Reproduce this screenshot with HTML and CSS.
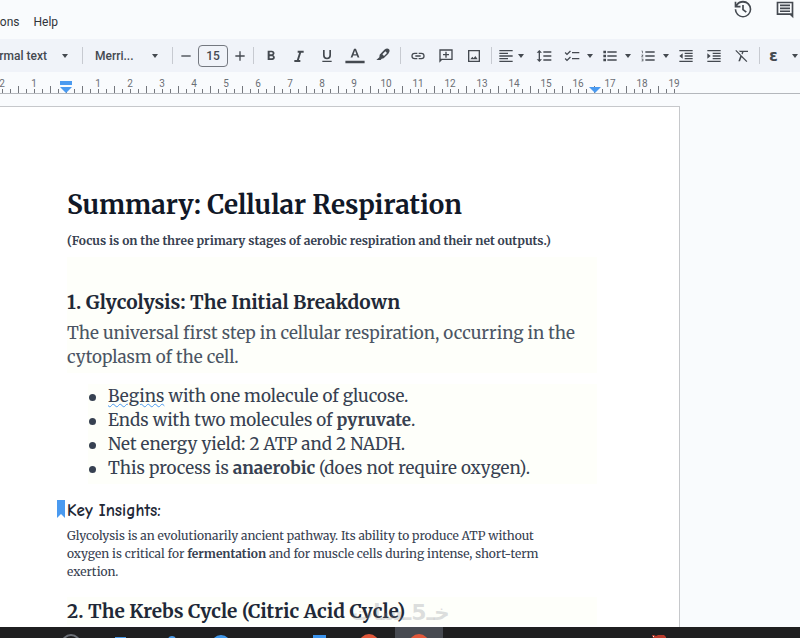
FILE: index.html
```html
<!DOCTYPE html>
<html lang="en">
<head>
  <meta charset="UTF-8">
  <meta name="viewport" content="width=device-width, initial-scale=1.0">
  <title>Summary: Cellular Respiration</title>
  <link rel="stylesheet" href="styles.css">
</head>
<body>
  <header class="topbar">
    <nav class="menu">
      <a href="#">Extensions</a>
      <a href="#">Help</a>
    </nav>
    <div class="actions">
      <button aria-label="Version history"><svg viewBox="0 0 24 24"><path d="M12 1a10 10 0 0 0-8 4V2H2v7h7V7H5.200A8 8 0 1 1 4 11H2A10 10 0 1 0 12 1zm-1 5v6l4.300 3.300 1.300-1.500L13 11V6z"/></svg></button>
      <button aria-label="Comments"><svg viewBox="0 0 24 24"><path d="M2 2v16h16l4 4V2zm2 2h16v12H4zm2 1.500v2h12v-2zm0 3.500v2h12V9zm0 3.500v2h12v-2z"/></svg></button>
    </div>
  </header>

  <div class="toolbar">
    <div class="dropdown style-pick">
      <select aria-label="Styles"><option>Normal text</option><option>Heading 1</option></select>
    </div>
    <span class="sep"></span>
    <div class="dropdown font-pick">
      <select aria-label="Font"><option>Merri...</option><option>Arial</option></select>
    </div>
    <span class="sep"></span>
    <div class="size">
      <button aria-label="Decrease font size"><svg viewBox="0 0 24 24"><path d="M5 11h14v2H5z"/></svg></button>
      <input type="text" value="15" aria-label="Font size">
      <button aria-label="Increase font size"><svg viewBox="0 0 24 24"><path d="M11 5h2v6h6v2h-6v6h-2v-6H5v-2h6z"/></svg></button>
    </div>
    <span class="sep"></span>
    <div class="group">
      <button aria-label="Bold"><svg viewBox="0 0 24 24"><path d="M15.600 10.790c.97-.67 1.650-1.770 1.650-2.790 0-2.260-1.750-4-4-4H7v14h7.040c2.090 0 3.710-1.700 3.710-3.790 0-1.520-.86-2.820-2.150-3.420zM10 6.500h3a1.500 1.500 0 0 1 0 3h-3zm3.500 9H10v-3h3.500a1.500 1.500 0 0 1 0 3z"/></svg></button>
      <button aria-label="Italic"><svg viewBox="0 0 24 24"><path d="M10 4v3h2.210l-3.420 11H5v3h9v-3h-2.210l3.420-11H19V4z"/></svg></button>
      <button aria-label="Underline"><svg viewBox="0 0 24 24"><path d="M12 17a6 6 0 0 0 6-6V3h-2.500v8a3.500 3.500 0 0 1-7 0V3H6v8a6 6 0 0 0 6 6zm-7 2v2h14v-2z"/></svg></button>
      <button aria-label="Text color"><svg class="wide" viewBox="0 0 24 20"><path d="M10.800 1h2.400l4.300 11h-2.300l-.9-2.500H9.700L8.800 12H6.500zm-.5 6.700h3.400L12 3.200zM0 16h24v3H0z"/></svg></button>
      <button aria-label="Highlight color"><svg viewBox="0 0 24 24"><path fill-rule="evenodd" d="M14 2.500c3-2 5.500-2 7-.5s1 4-1 6.500l-7 7-3 .5-1.500 2H2l4.500-4 .5-4zM15.500 5 11 9.500l2.500 2.500L18 7.500z"/></svg></button>
    </div>
    <span class="sep"></span>
    <div class="group">
      <button aria-label="Insert link"><svg viewBox="0 0 24 24"><path d="M3.900 12A3.100 3.100 0 0 1 7 8.900h4V7H7a5 5 0 0 0 0 10h4v-1.900H7A3.100 3.100 0 0 1 3.900 12zM8 13h8v-2H8zm9-6h-4v1.900h4a3.100 3.100 0 0 1 0 6.200h-4V17h4a5 5 0 0 0 0-10z"/></svg></button>
      <button aria-label="Add comment"><svg viewBox="0 0 24 24"><path d="M2 2v20l4-4h16V2zm2 2h16v12H4zm7 1.500V9H7.500v2H11v3.500h2V11h3.500V9H13V5.500z"/></svg></button>
      <button aria-label="Insert image"><svg viewBox="0 0 24 24"><path d="M3 3v18h18V3zm2 2h14v14H5zm1.500 12h11l-3.500-5-2.500 3.500L9.500 13z"/></svg></button>
    </div>
    <span class="sep"></span>
    <div class="group">
      <button class="more tight" aria-label="Align"><svg viewBox="0 0 24 24"><path d="M2 3h20v2H2zm0 4h13v2H2zm0 4h20v2H2zm0 4h13v2H2zm0 4h20v2H2z"/></svg></button>
      <button aria-label="Line spacing"><svg viewBox="0 0 24 24"><path d="M6 7h3L5 3 1 7h3v10H1l4 4 4-4H6zm5-2h12v2H11zm0 6h12v2H11zm0 6h12v2H11z"/></svg></button>
      <button class="more" aria-label="Checklist"><svg viewBox="0 0 24 24"><path d="M12 6h11v2H12zm0 9h11v2H12zM4.500 11 1 7.500 2.400 6.100l2.100 2.100L9 3.700l1.400 1.400zm0 9L1 16.500l1.400-1.400 2.100 2.100L9 12.700l1.400 1.400z"/></svg></button>
      <button class="more" aria-label="Bulleted list"><svg viewBox="0 0 24 24"><path d="M2 4h4v4H2zm0 6h4v4H2zm0 6h4v4H2zM8 5h14v2H8zm0 6h14v2H8zm0 6h14v2H8z"/></svg></button>
      <button class="more" aria-label="Numbered list"><svg viewBox="0 0 24 24"><path d="M2 17h2v.5H3v1h1v.5H2v1h3v-4H2zm1-9h1V4H2v1h1zm-1 3h1.800L2 13.100v.9h3v-1H3.200L5 10.900V10H2zm6-6v2h14V5zm0 14h14v-2H8zm0-6h14v-2H8z"/></svg></button>
      <button aria-label="Decrease indent"><svg viewBox="0 0 24 24"><path d="M2 3h20v2H2zm8 4h12v2H10zm0 4h12v2H10zm0 4h12v2H10zm-8 4h20v2H2zm0-7 5-4v8z"/></svg></button>
      <button aria-label="Increase indent"><svg viewBox="0 0 24 24"><path d="M2 3h20v2H2zm8 4h12v2H10zm0 4h12v2H10zm0 4h12v2H10zm-8 4h20v2H2zM7 12 2 8v8z"/></svg></button>
      <button aria-label="Clear formatting"><svg viewBox="0 0 24 24"><path d="M3.300 3 2 4.300l7.500 7.500L6.500 20H9l2.300-6.300L18.700 21l1.300-1.300zM7 4l2 2h3l-.8 2.200 1.600 1.600L14.300 6H21V4z"/></svg></button>
    </div>
    <span class="sep"></span>
    <button class="more glyph" aria-label="Input tools">ε</button>
  </div>

  <div class="ruler">
    <ol class="marks">
      <li>2</li><li>1</li>
      <li class="zero"><svg viewBox="0 0 12 12"><path d="M0 0h12v4H0zM0 6h12l-6 6z"/></svg></li>
      <li>1</li><li>2</li><li>3</li><li>4</li><li>5</li><li>6</li><li>7</li><li>8</li><li>9</li><li>10</li>
      <li>11</li><li>12</li><li>13</li><li>14</li><li>15</li>
      <li class="stop">16<svg viewBox="0 0 12 12"><path d="M0 6h12l-6 6z"/></svg></li>
      <li>17</li><li>18</li><li class="last">19</li>
    </ol>
  </div>

  <main class="canvas">
    <article class="sheet">
      <h1>Summary: Cellular Respiration</h1>
      <p class="focus">(Focus is on the three primary stages of aerobic respiration and their net outputs.)</p>
      <section class="tint intro">
        <h2>1. Glycolysis: The Initial Breakdown</h2>
        <p class="lead">The universal first step in cellular respiration, occurring in the cytoplasm of the cell.</p>
      </section>
      <ul class="tint points">
        <li><span class="typo">Begins</span> with one molecule of glucose.</li>
        <li>Ends with two molecules of <b>pyruvate</b>.</li>
        <li>Net energy yield: 2 ATP and 2 NADH.</li>
        <li>This process is <b>anaerobic</b> (does not require oxygen).</li>
      </ul>
      <h3><svg class="bookmark" viewBox="0 0 8 18"><path d="M0 0h8v18l-4-4-4 4z"/></svg>Key Insights:</h3>
      <p class="note">Glycolysis is an evolutionarily ancient pathway. Its ability to produce ATP without oxygen is critical for <b>fermentation</b> and for muscle cells during intense, short-term exertion.</p>
      <h2 class="tint krebs">2. The Krebs Cycle (Citric Acid Cycle)<span class="watermark" lang="ar" dir="rtl">خـ5ـسات</span></h2>
    </article>
  </main>

  <footer class="taskbar">
    <button aria-label="Search"><svg viewBox="0 0 20 4"><circle cx="12" cy="10" r="9" fill="none" stroke="#6d7178" stroke-width="2"/></svg></button>
    <button aria-label="Task view"><svg viewBox="0 0 20 4"><path fill="#4a9ae8" d="M6 3h11v1H6z"/></svg></button>
    <button aria-label="Assistant"><svg viewBox="0 0 20 4"><circle cx="13" cy="6" r="4" fill="#4a9ae8"/></svg></button>
    <button aria-label="Browser"><svg viewBox="0 0 20 4"><circle cx="12" cy="11" r="10" fill="#3f97ea"/></svg></button>
    <button aria-label="Files"></button>
    <button aria-label="Editor"><svg viewBox="0 0 20 4"><path fill="#3b93ec" d="M4 1h13v3H4z"/></svg></button>
    <button aria-label="Chrome"><svg viewBox="0 0 20 4"><circle cx="10" cy="10" r="10" fill="#e1573a"/></svg></button>
    <button class="active" aria-label="Chrome, current window"><svg viewBox="0 0 20 4"><circle cx="10" cy="10" r="10" fill="#e1573a"/></svg></button>
    <button class="tray" aria-label="Tray"><svg viewBox="0 0 20 4"><path fill="#b93a2b" d="M3 1h2l2 1 2-1h6l2 2v1H4z"/><path fill="#eee" d="M4 2h1v1H4z"/></svg></button>
  </footer>
</body>
</html>
```
FILE: styles.css
```css
:root {
  --bg: #f9fbfd;
  --bar: #f0f3f9;
  --icon: #444950;
  --blue: #4a9af0;
  --tint: #fefffa;
  --serif: Merriweather, "DejaVu Serif Condensed", "DejaVu Serif", serif;
}

* {
  box-sizing: border-box;
}

body {
  margin: 0;
  height: 100vh;
  display: flex;
  flex-direction: column;
  overflow: hidden;
  background: var(--bg);
  color: #374151;
  font-family: Roboto, sans-serif;
  font-size: 12px;
}

button {
  padding: 0;
  border: 0;
  background: none;
  color: var(--icon);
  font: inherit;
}

svg {
  display: block;
  fill: currentColor;
}

/* top bar */
.topbar {
  flex: none;
  height: 39px;
  display: flex;
  justify-content: space-between;
}

.menu {
  display: flex;
  gap: 14px;
  margin-left: -39px;
  padding-top: 14px;
  line-height: 16px;
}

.menu a {
  color: #30343a;
  text-decoration: none;
}

.actions {
  display: flex;
  gap: 22px;
  padding-right: 5px;
}

.actions button {
  width: 20px;
  height: 18px;
}

.actions svg {
  width: 20px;
  height: 20px;
}

/* toolbar */
.toolbar {
  flex: none;
  height: 33px;
  display: flex;
  align-items: center;
  background: var(--bar);
}

.sep {
  flex: none;
  width: 1px;
  height: 17px;
  margin: 0 4px;
  background: #c7cad1;
}

.group {
  display: flex;
  gap: 2px;
}

.toolbar button {
  flex: none;
  width: 26px;
  height: 24px;
  display: flex;
  align-items: center;
  justify-content: center;
}

.toolbar svg {
  width: 16px;
  height: 16px;
}

.toolbar .wide {
  width: 20px;
}

.dropdown,
.more {
  position: relative;
}

.dropdown::after,
.more::after {
  content: "";
  position: absolute;
  top: 50%;
  right: 2px;
  margin-top: -2px;
  border: 3px solid transparent;
  border-top: 4px solid var(--icon);
  border-bottom: 0;
  pointer-events: none;
}

.dropdown::after {
  right: 10px;
}

.dropdown select {
  width: 100%;
  height: 24px;
  padding: 0;
  border: 0;
  appearance: none;
  background: none;
  color: var(--icon);
  font: 500 12px Roboto, sans-serif;
}

.style-pick {
  flex: none;
  width: 94px;
  margin-left: -16px;
}

.font-pick {
  flex: none;
  width: 81px;
  padding-left: 8px;
}

.toolbar .more {
  width: 36px;
  justify-content: flex-start;
  padding-left: 5px;
}

.toolbar .tight {
  width: 33px;
  padding-left: 2px;
}

.toolbar .tight::after {
  right: 5px;
}

.toolbar .glyph {
  font-family: "DejaVu Sans", sans-serif;
  font-size: 16px;
  font-weight: bold;
}

.size {
  display: flex;
  gap: 3px;
  align-items: center;
}

.toolbar .size button {
  width: 18px;
}

.size input {
  width: 30px;
  height: 22px;
  padding: 0;
  border: 1px solid #747880;
  border-radius: 4px;
  background: none;
  color: var(--icon);
  font: 500 12px Roboto, sans-serif;
  text-align: center;
}

/* ruler, one cell per centimetre */
.ruler {
  flex: none;
  height: 22px;
  overflow: hidden;
  border-bottom: 1px solid #b4b7bc;
}

.marks {
  display: flex;
  margin: 0 0 0 -14px;
  padding: 0;
  list-style: none;
}

.marks li {
  --tick: linear-gradient(#75787e, #75787e);
  position: relative;
  flex: none;
  width: 32px;
  height: 21px;
  padding-top: 6px;
  background: var(--tick) 0 100% / 1px 7px, var(--tick) 8px 100% / 1px 4px, var(--tick) 16px 100% / 1px 4px, var(--tick) 24px 100% / 1px 4px;
  background-repeat: no-repeat;
  color: #6b6f76;
  font-size: 10px;
  line-height: 12px;
  text-align: center;
}

.marks .last {
  background: var(--tick) 0 100% / 1px 7px, var(--tick) 8px 100% / 1px 4px, var(--tick) 16px 100% / 1px 4px;
  background-repeat: no-repeat;
}

.marks svg {
  position: absolute;
  left: 10px;
  bottom: 0;
  width: 12px;
  height: 12px;
  color: var(--blue);
}

.marks .stop svg {
  left: 27px;
}

.marks .stop {
  z-index: 1;
}

/* document */
.canvas {
  flex: 1;
  min-height: 0;
  overflow: hidden;
  padding: 12px 120px 0 0;
}

.sheet {
  min-height: 100%;
  padding: 80px 82px 0 67px;
  border: solid #c6c8cb;
  border-width: 1px 1px 0 0;
  background: #fff;
  font-family: var(--serif);
}

h1,
h2,
h3,
p,
ul {
  margin: 0;
}

h1 {
  color: #111827;
  font-size: 26px;
  line-height: 36px;
}

.focus {
  padding: 10px 0 8px;
  font-size: 12px;
  font-weight: bold;
  line-height: 16px;
}

.tint {
  background: var(--tint);
}

h2 {
  color: #1f2937;
  font-size: 19px;
  line-height: 28px;
}

.intro {
  padding-top: 31px;
}

.lead,
.points {
  font-size: 17px;
  line-height: 24px;
}

.lead {
  padding: 5px 0 4px;
  color: #4b5563;
}

.points {
  margin: 11px 0 0 21px;
  padding: 0 0 4px 20px;
  list-style: none;
}

.points li::before {
  content: "";
  display: inline-block;
  width: 7px;
  height: 7px;
  margin: 0 12px 1px -19px;
  border-radius: 50%;
  background: #374151;
}

.typo {
  text-decoration: underline wavy var(--blue) 1px;
}

h3 {
  position: relative;
  margin-top: 15px;
  color: #1f2937;
  font: bold 17px/24px "Comic Sans MS", "Comic Neue", Lato, sans-serif;
}

.bookmark {
  position: absolute;
  left: -10px;
  top: 1px;
  width: 8px;
  height: 18px;
  color: var(--blue);
}

.note {
  padding: 4px 30px 16px 0;
  font-size: 12px;
  line-height: 18px;
}

.krebs {
  position: relative;
}

.watermark {
  position: absolute;
  left: 284px;
  top: 2px;
  color: rgba(120, 125, 135, 0.25);
  font: bold 22px/28px "DejaVu Sans", sans-serif;
}

/* taskbar */
.taskbar {
  flex: none;
  height: 11px;
  display: flex;
  gap: 2px;
  padding-left: 45px;
  background: #1f1f20;
}

.taskbar button {
  width: 48px;
  display: flex;
  align-items: flex-end;
  justify-content: center;
}

.taskbar svg {
  width: 20px;
  height: 4px;
}

.taskbar .active {
  background: #474a51;
}

.taskbar .tray {
  margin-left: 190px;
}
```
